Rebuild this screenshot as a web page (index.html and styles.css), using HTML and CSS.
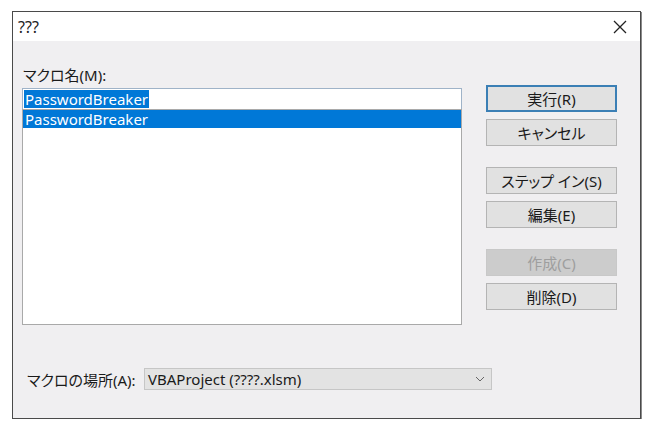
FILE: index.html
```html
<!DOCTYPE html>
<html lang="ja">

<head>
    <meta charset="UTF-8">
    <title>マクロ</title>
    <link rel="stylesheet" href="styles.css">
</head>

<body>
    <div class="window">
        <div class="titlebar">
            <span class="title">???</span>
            <svg class="close" width="14" height="14" viewBox="0 0 14 14">
                <path d="M1 1 L13 13 M13 1 L1 13" stroke="#222" stroke-width="1.3" fill="none" />
            </svg>
        </div>

        <div class="content">
            <div class="main">
                <div class="left">
                    <div class="label">マクロ名(M):</div>
                    <div class="name-input"><span class="sel">PasswordBreaker</span></div>
                    <div class="listbox">
                        <div class="item selected">PasswordBreaker</div>
                    </div>
                </div>

                <div class="buttons">
                    <button class="btn default">実行(R)</button>
                    <button class="btn">キャンセル</button>
                    <button class="btn group">ステップ イン(S)</button>
                    <button class="btn">編集(E)</button>
                    <button class="btn group" disabled>作成(C)</button>
                    <button class="btn">削除(D)</button>
                </div>
            </div>

            <div class="location">
                <span class="loc-label">マクロの場所(A):</span>
                <div class="combo">
                    <span>VBAProject (????.xlsm)</span>
                    <svg class="chevron" width="10" height="6" viewBox="0 0 10 6">
                        <path d="M1 1 L5 5 L9 1" stroke="#666" stroke-width="1" fill="none" />
                    </svg>
                </div>
            </div>
        </div>
    </div>
</body>

</html>
```

FILE: styles.css
```css
* {
    box-sizing: border-box;
    margin: 0;
    padding: 0;
}

body {
    background: #ffffff;
    font-family: "Noto Sans", "Noto Sans CJK JP", sans-serif;
    font-size: 15px;
    font-feature-settings: "palt";
    color: #1a1a1a;
}

.window {
    margin: 11px 0 0 12px;
    width: 629px;
    height: 408px;
    border: 1px solid #4a4a4a;
    box-shadow: 1px 1px 0 #8a8a8a;
    background: #f0eff1;
    display: flex;
    flex-direction: column;
}

.titlebar {
    height: 29px;
    background: #ffffff;
    display: flex;
    align-items: center;
    justify-content: space-between;
    padding: 0 13px 0 5px;
}

.title {
    font-size: 16px;
    color: #222;
}

.content {
    flex: 1;
    display: flex;
    flex-direction: column;
    padding: 25px 0 0 9px;
}

.main {
    display: flex;
    gap: 24px;
}

.left {
    width: 440px;
}

.label {
    height: 18px;
    line-height: 18px;
    padding-left: 1px;
    margin-bottom: 4px;
}

.name-input {
    height: 22px;
    border: 1px solid #9fb3c8;
    background: #ffffff;
    padding: 1px 1px;
    line-height: 18px;
}

.sel {
    display: inline-block;
    background: #0078d7;
    color: #ffffff;
    padding: 0 1px;
}

.listbox {
    height: 216px;
    margin-top: -1px;
    border: 1px solid #a9a9a9;
    background: #ffffff;
}

.item {
    height: 18px;
    line-height: 18px;
    padding-left: 2px;
}

.item.selected {
    background: #0078d7;
    color: #ffffff;
}

.buttons {
    display: flex;
    flex-direction: column;
    gap: 7px;
    width: 131px;
    padding-top: 19px;
}

.btn {
    height: 27px;
    border: 1px solid #b4b4b4;
    background: #e1e1e1;
    font-family: inherit;
    font-size: 15px;
    font-feature-settings: "palt";
    color: #1a1a1a;
}

.btn.default {
    border: 2px solid #3b7fb5;
}

.btn.group {
    margin-top: 14px;
}

.btn:disabled {
    background: #cccccc;
    border-color: #c8c8c8;
    color: #9e9e9e;
}

.location {
    display: flex;
    align-items: center;
    margin-top: 43px;
    padding-left: 5px;
}

.loc-label {
    width: 117px;
}

.combo {
    width: 348px;
    height: 22px;
    border: 1px solid #c6c6c6;
    background: #e3e3e3;
    display: flex;
    align-items: center;
    justify-content: space-between;
    padding: 0 6px 0 3px;
}
```
